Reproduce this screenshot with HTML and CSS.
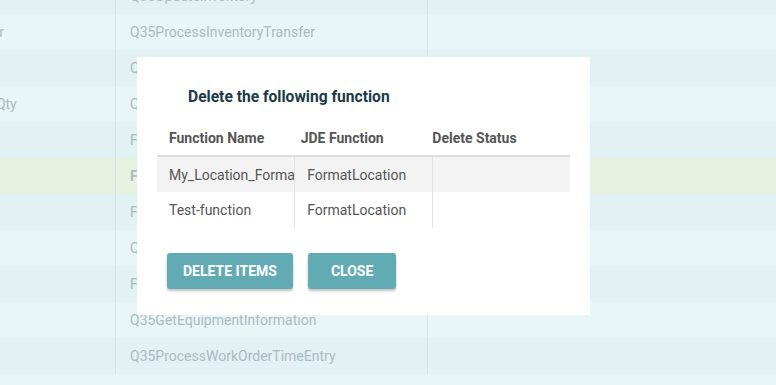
FILE: index.html
```html
<!DOCTYPE html>
<html lang="en">
<head>
  <meta charset="UTF-8">
  <title>Functions</title>
  <link rel="stylesheet" href="styles.css">
</head>
<body>
  <div class="grid">
    <div class="row dark"><div class="cell c1"></div><div class="cell c2">Q35UpdateInventory</div><div class="cell c3"></div></div>
    <div class="row light"><div class="cell c1">Lot Transfer</div><div class="cell c2">Q35ProcessInventoryTransfer</div><div class="cell c3"></div></div>
    <div class="row dark"><div class="cell c1"></div><div class="cell c2">Q35GetItemLocation</div><div class="cell c3"></div></div>
    <div class="row light"><div class="cell c1">Backorder Qty</div><div class="cell c2">Q35GetAvailableQty</div><div class="cell c3"></div></div>
    <div class="row dark"><div class="cell c1"></div><div class="cell c2">FormatLocation</div><div class="cell c3"></div></div>
    <div class="row selected"><div class="cell c1"></div><div class="cell c2 bold">FormatLocation</div><div class="cell c3"></div></div>
    <div class="row dark"><div class="cell c1"></div><div class="cell c2">FormatLocation</div><div class="cell c3"></div></div>
    <div class="row light"><div class="cell c1"></div><div class="cell c2">Q35GetItemBranch</div><div class="cell c3"></div></div>
    <div class="row dark"><div class="cell c1"></div><div class="cell c2">FormatDate</div><div class="cell c3"></div></div>
    <div class="row light"><div class="cell c1"></div><div class="cell c2">Q35GetEquipmentInformation</div><div class="cell c3"></div></div>
    <div class="row dark"><div class="cell c1"></div><div class="cell c2">Q35ProcessWorkOrderTimeEntry</div><div class="cell c3"></div></div>
  </div>

  <div class="modal">
    <h3 class="modal-title">Delete the following function</h3>
    <table class="modal-table">
      <thead>
        <tr><th>Function Name</th><th>JDE Function</th><th>Delete Status</th></tr>
      </thead>
      <tbody>
        <tr class="odd"><td>My_Location_Format</td><td>FormatLocation</td><td></td></tr>
        <tr><td>Test-function</td><td>FormatLocation</td><td></td></tr>
      </tbody>
    </table>
    <div class="modal-actions">
      <button class="btn">Delete Items</button>
      <button class="btn">Close</button>
    </div>
  </div>
</body>
</html>
```

FILE: styles.css
```css
html, body {
  margin: 0;
  padding: 0;
  height: 100%;
  overflow: hidden;
  font-family: Roboto, "Liberation Sans", sans-serif;
  font-size: 14px;
  background-color: #e8f6f8;
}
*, *:before, *:after { box-sizing: border-box; }

.grid { margin-top: -22px; margin-left: -125px; }
.row { display: flex; height: 36px; }
.row.dark { background-color: #e2f1f3; }
.row.light { background-color: #e8f6f8; }
.row.selected { background-color: #e7f1df; }
.cell {
  display: flex;
  align-items: center;
  padding-left: 14px;
  color: #a9bcc0;
  white-space: nowrap;
  overflow: hidden;
}
.cell.c1 { width: 241px; padding-left: 54px; border-right: 1px solid #d6e6e8; }
.cell.c2 { width: 312px; border-right: 1px solid #d6e6e8; }
.cell.c3 { flex: 1; }
.cell.bold { font-weight: 700; }

.modal {
  position: absolute;
  left: 137px;
  top: 57px;
  width: 453px;
  height: 258px;
  background: #fff;
  padding: 20px 20px 0 20px;
}
.modal-title {
  margin: 9px 0 0 31px;
  font-size: 15.6px;
  font-weight: 700;
  color: #1c3b48;
  line-height: 22px;
}
.modal-table {
  margin-top: 13px;
  width: 413px;
  table-layout: fixed;
  border-collapse: collapse;
  color: #555;
}
.modal-table th {
  text-align: left;
  font-weight: 700;
  height: 35px;
  padding: 0 0 0 12px;
  border-bottom: 2px solid #dedede;
}
.modal-table th:nth-child(2) { padding-left: 6px; }
.modal-table th:nth-child(3) { padding-left: 0; }
.modal-table td {
  height: 36px;
  padding: 0 12px;
  white-space: nowrap;
  overflow: hidden;
  border-left: 1px solid #e2e2e2;
}
.modal-table td:first-child { border-left: none; }
.modal-table tr.odd td { background: #f3f3f3; }

.modal-actions { display: flex; gap: 15px; margin: 25px 0 0 10px; }
.btn {
  height: 36px;
  padding: 0 16px;
  border: none;
  border-radius: 3px;
  background: #62abb4;
  color: #fff;
  font-family: Roboto, "Liberation Sans", sans-serif;
  font-size: 14px;
  font-weight: 700;
  text-transform: uppercase;
  box-shadow: 0 2px 3px rgba(0, 0, 0, 0.25);
  cursor: pointer;
}
.btn:last-child { padding: 0 23px; }
```
